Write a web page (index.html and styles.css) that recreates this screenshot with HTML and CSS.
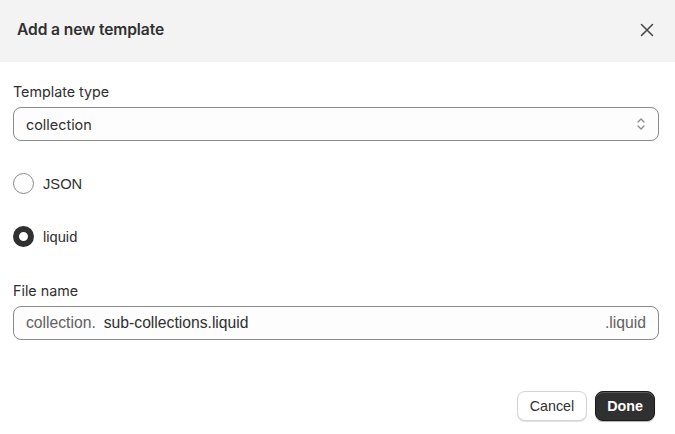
FILE: index.html
```html
<!DOCTYPE html>
<html>
<head>
<meta charset="utf-8">
<link rel="stylesheet" href="styles.css">
</head>
<body>
<div class="modal">
  <header class="header">
    <h2 class="title">Add a new template</h2>
    <button class="close" aria-label="Close">
      <svg width="14" height="14" viewBox="0 0 14 14"><path d="M1.5 1.5L12.5 12.5M12.5 1.5L1.5 12.5" stroke="#4a4a4a" stroke-width="1.6" stroke-linecap="round"/></svg>
    </button>
  </header>
  <main class="body">
    <div class="field">
      <label class="label">Template type</label>
      <div class="select">
        <span>collection</span>
        <svg class="chev" width="10" height="16" viewBox="0 0 10 16"><path d="M2 6L5 3L8 6M2 10L5 13L8 10" fill="none" stroke="#8a8a8a" stroke-width="1.3" stroke-linecap="round" stroke-linejoin="round"/></svg>
      </div>
    </div>
    <div class="radios">
      <label class="radio"><span class="dot"></span><span>JSON</span></label>
      <label class="radio"><span class="dot on"></span><span>liquid</span></label>
    </div>
    <div class="field">
      <label class="label">File name</label>
      <div class="input">
        <span class="prefix">collection.</span>
        <span class="value">sub-collections.liquid</span>
        <span class="suffix">.liquid</span>
      </div>
    </div>
  </main>
  <footer class="footer">
    <button class="btn">Cancel</button>
    <button class="btn primary">Done</button>
  </footer>
</div>
</body>
</html>
```
FILE: styles.css
```css
* { box-sizing: border-box; }
html, body { margin: 0; padding: 0; background: #fff; }
body { font-family: Inter, "Liberation Sans", Arial, sans-serif; color: #303030; font-size: 14px; }
.modal { width: 675px; height: 434px; display: flex; flex-direction: column; }
.header { height: 62px; background: #f3f3f3; display: flex; align-items: center; justify-content: space-between; padding: 0 21px 0 17px; }
.title { margin: 0; font-size: 15.6px; font-weight: 600; color: #303030; letter-spacing: -0.1px; line-height: 20px; margin-top: -2px; }
.close { border: 0; background: none; padding: 0; width: 14px; height: 14px; display: flex; margin-top: -2px; }
.body { padding: 21px 16px 0 13px; display: flex; flex-direction: column; }
.label { display: block; font-size: 14.3px; line-height: 18px; color: #303030; margin-bottom: 6px; }
.select { height: 34px; border: 1px solid #8a8a8a; border-radius: 8px; background: #fdfdfd; display: flex; align-items: center; justify-content: space-between; padding: 0 12px 0 12px; font-size: 14.4px; }
.radios { display: flex; flex-direction: column; gap: 32px; padding: 32px 0 35px; }
.radio { display: flex; align-items: center; gap: 9px; height: 21px; font-family: "Liberation Sans", Arial, sans-serif; font-size: 14.7px; }
.dot { width: 21px; height: 21px; border-radius: 50%; border: 1px solid #8a8a8a; background: #fff; }
.dot.on { border: 6px solid #303030; }
.input { height: 34px; border: 1px solid #8a8a8a; border-radius: 8px; background: #fdfdfd; display: flex; align-items: center; padding: 0 12px; font-family: "Liberation Sans", Arial, sans-serif; font-size: 15.7px; }
.prefix { color: #616161; margin-right: 8px; }
.value { flex: 1; color: #303030; }
.suffix { color: #616161; }
.footer { margin-top: auto; padding: 0 20px 13px 0; display: flex; justify-content: flex-end; gap: 8px; }
.btn { height: 30px; border-radius: 8px; border: 1px solid #d4d4d4; background: #fff; font-family: "Liberation Sans", Arial, sans-serif; font-size: 14.3px; color: #303030; padding: 0 12px; box-shadow: 0 1px 0 #e3e3e3; }
.btn.primary { background: #303030; color: #fff; border-color: #1a1a1a; font-weight: 700; padding: 0 11px; box-shadow: inset 0 1px 0 rgba(255,255,255,0.2), 0 1px 1px rgba(0,0,0,0.3); }
```
